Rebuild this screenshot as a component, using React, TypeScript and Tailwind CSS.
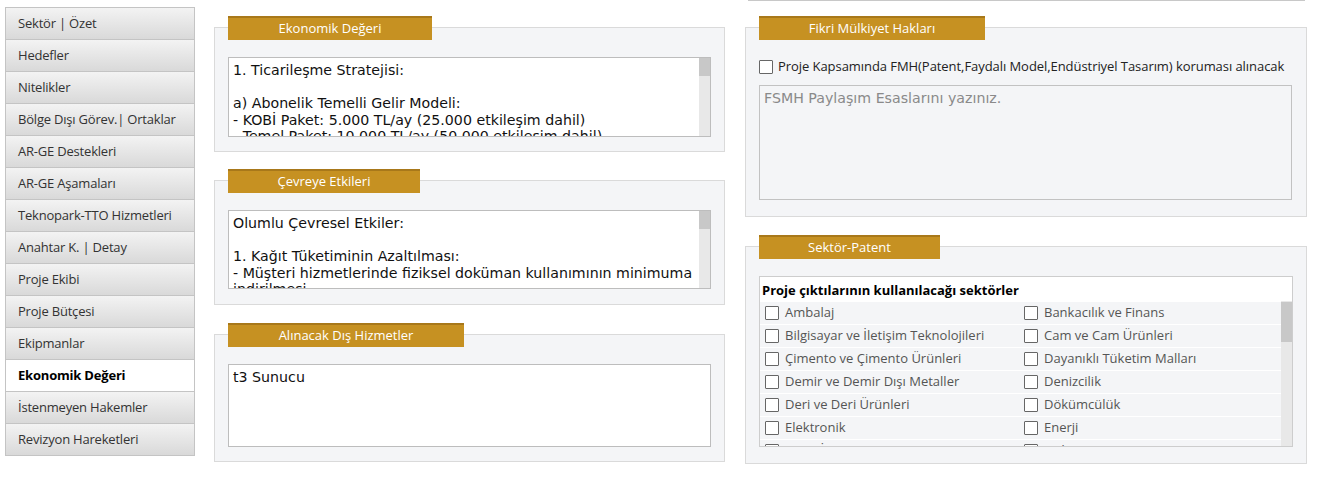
const menuItems = [
  "Sektör | Özet",
  "Hedefler",
  "Nitelikler",
  "Bölge Dışı Görev.| Ortaklar",
  "AR-GE Destekleri",
  "AR-GE Aşamaları",
  "Teknopark-TTO Hizmetleri",
  "Anahtar K. | Detay",
  "Proje Ekibi",
  "Proje Bütçesi",
  "Ekipmanlar",
  "Ekonomik Değeri",
  "İstenmeyen Hakemler",
  "Revizyon Hareketleri",
];

const sectors = [
  ["Ambalaj", "Bankacılık ve Finans"],
  ["Bilgisayar ve İletişim Teknolojileri", "Cam ve Cam Ürünleri"],
  ["Çimento ve Çimento Ürünleri", "Dayanıklı Tüketim Malları"],
  ["Demir ve Demir Dışı Metaller", "Denizcilik"],
  ["Deri ve Deri Ürünleri", "Dökümcülük"],
  ["Elektronik", "Enerji"],
  ["Gemi İnşa", "Gıda Sanayi"],
];

const ui = "font-['Open_Sans','Noto_Sans',sans-serif]";
const mono = "font-['DejaVu_Sans','Verdana',sans-serif]";

const Tab = ({ title, width }: { title: string; width: string }) => (
  <div
    className={`relative z-10 ml-[14px] h-[24px] ${width} border-t-2 border-[#a8781a] bg-[#c69122] text-center text-[13px] leading-[21px] text-white ${ui}`}
  >
    {title}
  </div>
);

const FakeScroll = () => (
  <div className="flex w-[11px] shrink-0 flex-col bg-[#e8e8e8]">
    <div className="h-[18px] bg-[#c8c8c8]" />
  </div>
);

const TextBox = ({ text, height, scroll }: { text: string; height: string; scroll?: boolean }) => (
  <div className={`flex ${height} border border-[#bdbdbd] bg-white`}>
    <div
      className={`flex-1 overflow-hidden whitespace-pre-wrap px-[4px] pt-[4px] text-[14.2px] leading-[16.5px] text-[#111] ${mono}`}
    >
      {text}
    </div>
    {scroll && <FakeScroll />}
  </div>
);

const Panel = ({
  title,
  tabWidth,
  boxHeight,
  children,
}: {
  title: string;
  tabWidth: string;
  boxHeight: string;
  children: React.ReactNode;
}) => (
  <div className="flex flex-col">
    <Tab title={title} width={tabWidth} />
    <div className={`-mt-[13px] ${boxHeight} border border-[#dadada] bg-[#f4f5f7] px-[13px] pt-[29px]`}>
      {children}
    </div>
  </div>
);

const Check = () => (
  <span className="inline-block h-[14px] w-[14px] shrink-0 rounded-[1px] border border-[#666] bg-white" />
);

export default function App() {
  return (
    <div className="flex h-[495px] w-[1320px] bg-white">
      {/* Side menu */}
      <div className="ml-[5px] mt-[7px] flex w-[190px] shrink-0 flex-col self-start border border-[#c4c4c4]">
        {menuItems.map((item, i) => {
          const active = item === "Ekonomik Değeri";
          return (
            <div
              key={item}
              className={`pl-[12px] text-[13px] tracking-[-0.2px] ${ui} ${
                i > 0 ? "h-[32px] border-t border-[#c4c4c4] leading-[31px]" : "h-[31px] leading-[31px]"
              } ${
                active
                  ? "bg-white font-bold text-black"
                  : "bg-gradient-to-b from-[#f3f3f3] to-[#d9d9d9] text-[#333]"
              }`}
            >
              {item}
            </div>
          );
        })}
      </div>

      {/* Left column */}
      <div className="ml-[19px] mt-[16px] flex w-[511px] shrink-0 flex-col">
        <Panel title="Ekonomik Değeri" tabWidth="w-[204px]" boxHeight="h-[125px]">
          <TextBox
            height="h-[80px]"
            scroll
            text={
              "1. Ticarileşme Stratejisi:\n\na) Abonelik Temelli Gelir Modeli:\n- KOBİ Paket: 5.000 TL/ay (25.000 etkileşim dahil)\n- Temel Paket: 10.000 TL/ay (50.000 etkileşim dahil)\n- Kurumsal Paket: 20.000 TL/ay"
            }
          />
        </Panel>
        <div className="mt-[17px]">
          <Panel title="Çevreye Etkileri" tabWidth="w-[192px]" boxHeight="h-[125px]">
            <TextBox
              height="h-[79px]"
              scroll
              text={
                "Olumlu Çevresel Etkiler:\n\n1. Kağıt Tüketiminin Azaltılması:\n- Müşteri hizmetlerinde fiziksel doküman kullanımının minimuma indirilmesi"
              }
            />
          </Panel>
        </div>
        <div className="mt-[18px]">
          <Panel title="Alınacak Dış Hizmetler" tabWidth="w-[236px]" boxHeight="h-[128px]">
            <TextBox height="h-[83px]" text="t3 Sunucu" />
          </Panel>
        </div>
      </div>

      {/* Right column */}
      <div className="ml-[20px] flex w-[562px] shrink-0 flex-col">
        <div className="ml-[3px] mr-[2px] h-px bg-[#c8c8c8]" />
        <div className="mt-[15px]">
          <Panel title="Fikri Mülkiyet Hakları" tabWidth="w-[226px]" boxHeight="h-[190px]">
            <div className={`flex items-center gap-[5px] text-[13px] text-[#222] ${ui}`}>
              <Check />
              <span className="tracking-[-0.06px]">
                Proje Kapsamında FMH(Patent,Faydalı Model,Endüstriyel Tasarım) koruması alınacak
              </span>
            </div>
            <div
              className={`mt-[8px] h-[115px] w-[533px] border border-[#c2c2c2] bg-[#f4f5f7] px-[4px] pt-[4px] text-[14.2px] leading-[16.5px] text-[#8a8a8a] ${mono}`}
            >
              FSMH Paylaşım Esaslarını yazınız.
            </div>
          </Panel>
        </div>
        <div className="mt-[18px]">
          <Panel title="Sektör-Patent" tabWidth="w-[181px]" boxHeight="h-[218px]">
            <div className="h-[171px] w-[534px] overflow-hidden border border-[#cdcdcd] bg-white">
              <div className={`h-[24px] pl-[2px] text-[13px] font-bold leading-[27px] text-black ${ui}`}>
                Proje çıktılarının kullanılacağı sektörler
              </div>
              <div className="flex">
                <div className="flex flex-1 flex-col">
                  {sectors.map(([a, b]) => (
                    <div key={a} className={`flex h-[23px] shrink-0 border-t border-white bg-[#f4f5f7] text-[13px] text-[#555] ${ui}`}>
                      <div className="flex w-[264px] items-center gap-[6px] pl-[5px]">
                        <Check />
                        <span>{a}</span>
                      </div>
                      <div className="flex items-center gap-[6px]">
                        <Check />
                        <span>{b}</span>
                      </div>
                    </div>
                  ))}
                </div>
                <div className="flex h-[147px] w-[11px] shrink-0 flex-col bg-[#e8e8e8]">
                  <div className="mt-[1px] h-[40px] bg-[#c8c8c8]" />
                </div>
              </div>
            </div>
          </Panel>
        </div>
      </div>
    </div>
  );
}
